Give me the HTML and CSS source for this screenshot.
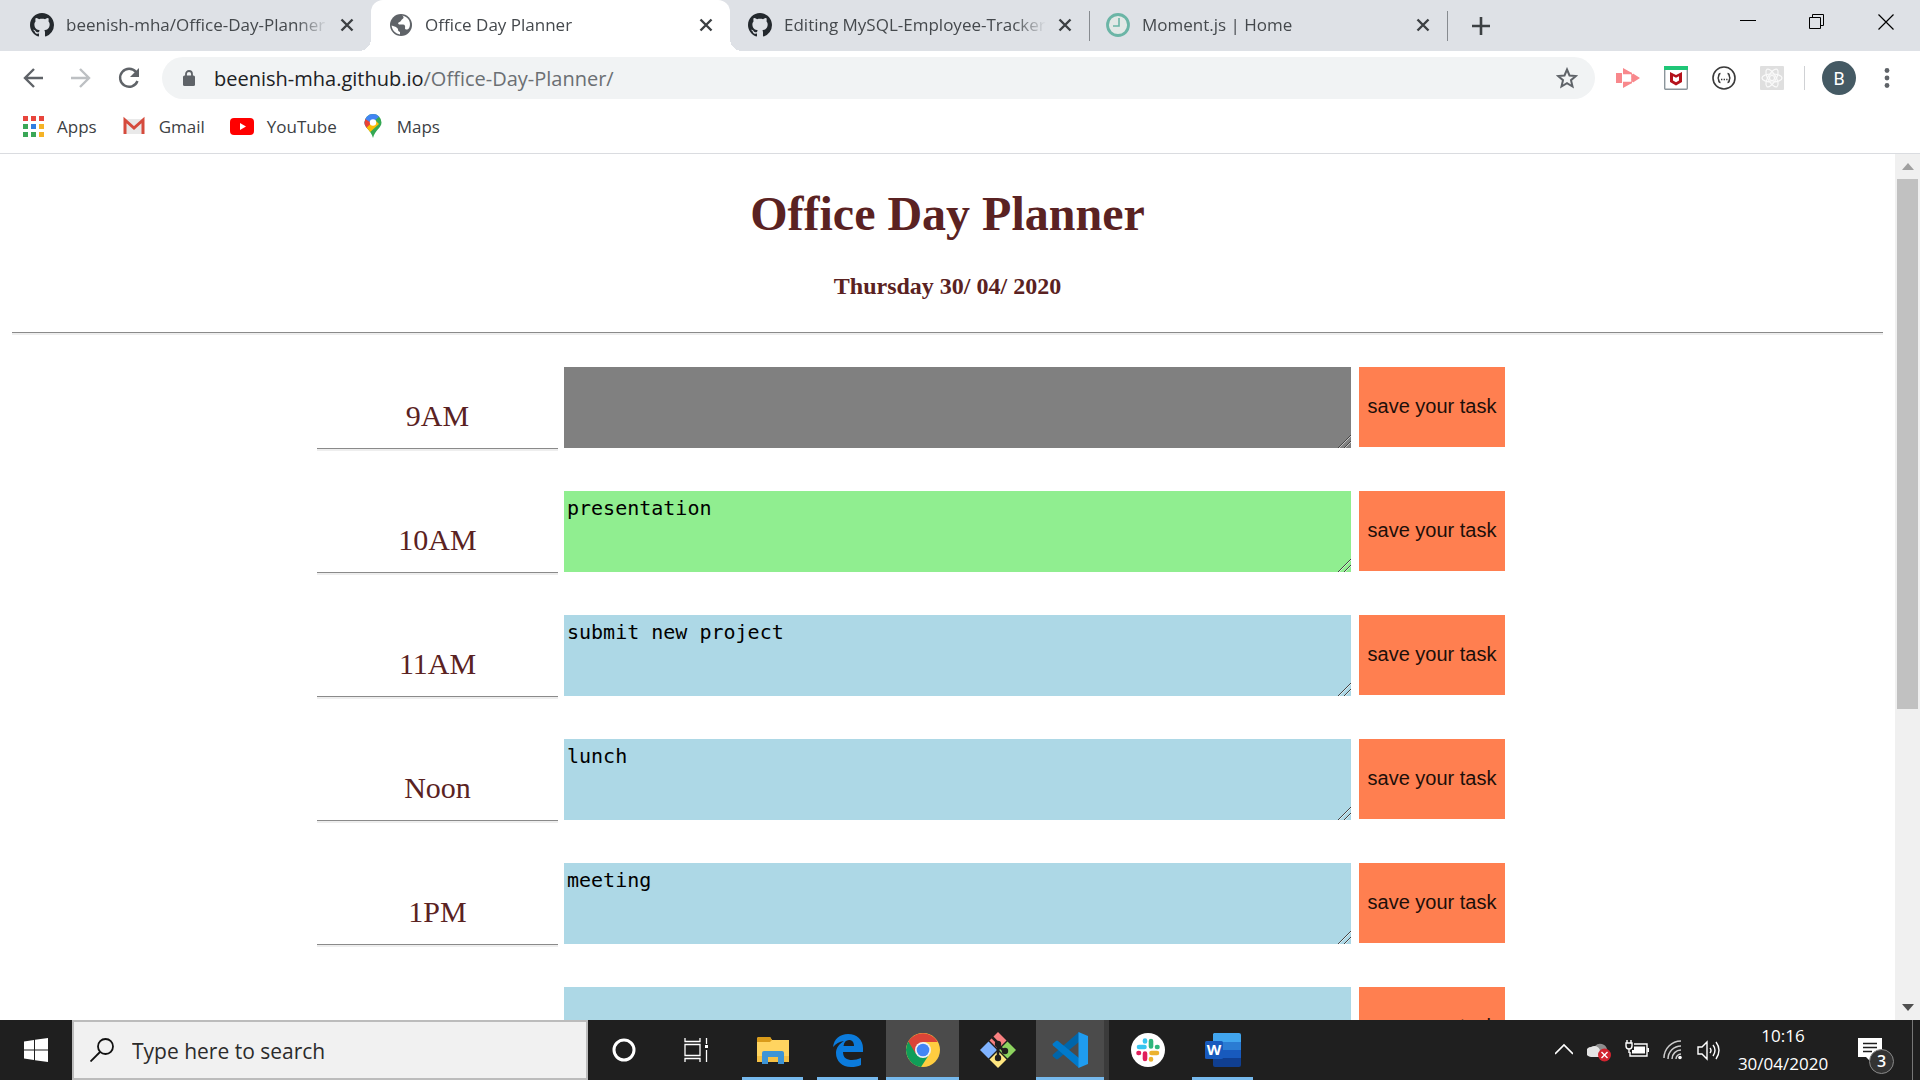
FILE: index.html
```html
<!DOCTYPE html>
<html lang="en">
<head>
<meta charset="utf-8">
<title>Office Day Planner</title>
<link rel="stylesheet" href="styles.css">
</head>
<body>
<svg class="defs" aria-hidden="true">
  <symbol id="octocat" viewBox="0 0 16 16"><path fill="#24292e" d="M8 0C3.58 0 0 3.58 0 8c0 3.54 2.29 6.53 5.47 7.59.4.07.55-.17.55-.38 0-.19-.01-.82-.01-1.49-2.01.37-2.53-.49-2.69-.94-.09-.23-.48-.94-.82-1.13-.28-.15-.68-.52-.01-.53.63-.01 1.08.58 1.23.82.72 1.21 1.87.87 2.33.66.07-.52.28-.87.51-1.07-1.78-.2-3.64-.89-3.64-3.95 0-.87.31-1.59.82-2.15-.08-.2-.36-1.02.08-2.12 0 0 .67-.21 2.2.82.64-.18 1.32-.27 2-.27s1.36.09 2 .27c1.53-1.04 2.2-.82 2.2-.82.44 1.1.16 1.92.08 2.12.51.56.82 1.27.82 2.15 0 3.07-1.87 3.75-3.65 3.95.29.25.54.73.54 1.48 0 1.07-.01 1.93-.01 2.2 0 .21.15.46.55.38A8.01 8.01 0 0 0 16 8c0-4.42-3.58-8-8-8z"/></symbol>
  <symbol id="cross" viewBox="0 0 14 14"><path d="M1.500 1.500l11 11M12.500 1.500l-11 11" stroke="#3c4043" stroke-width="2.400" fill="none"/></symbol>
</svg>

<header class="browser">
  <div class="tabs">
    <div class="tab">
      <svg class="icon"><use href="#octocat"/></svg>
      <span class="tab-title">beenish-mha/Office-Day-Planner</span>
      <button class="close" aria-label="Close tab"><svg><use href="#cross"/></svg></button>
    </div>
    <div class="tab active">
      <svg class="icon" viewBox="0 0 24 24"><circle cx="12" cy="12" r="11" fill="#5f6368"/><path d="M13 2.500c2 1 2 2.500.5 3.500-1.500 1-1.500 2.500-3 3-1.500.5-2 1.500-.5 2.500h4c2 0 2.500 2 2 3.500-.3 1 1 1.500 2 1.500 1.500 0 2.300-1.500 2.800-3.500C22 8 18 3 13 2.500zM2.600 12.500C3 17 6.500 21 11 21.400v-2.500c-1.500-.3-2-1.200-2-2.600 0-1-1-1.300-2-2.300z" fill="#fff"/></svg>
      <span class="tab-title">Office Day Planner</span>
      <button class="close" aria-label="Close tab"><svg><use href="#cross"/></svg></button>
    </div>
    <div class="tab">
      <svg class="icon"><use href="#octocat"/></svg>
      <span class="tab-title">Editing MySQL-Employee-Tracker</span>
      <button class="close" aria-label="Close tab"><svg><use href="#cross"/></svg></button>
    </div>
    <div class="tab ruled">
      <svg class="icon" viewBox="0 0 24 24"><circle cx="12" cy="12" r="10.500" fill="#e2e8e6" stroke="#6bb5a6" stroke-width="2.800"/><path d="M13 5v8H7" stroke="#6bb5a6" stroke-width="1.600" fill="none"/></svg>
      <span class="tab-title">Moment.js | Home</span>
      <button class="close" aria-label="Close tab"><svg><use href="#cross"/></svg></button>
    </div>
    <button class="new-tab" aria-label="New tab"><svg width="18" height="18" viewBox="0 0 18 18"><path d="M9 0v18M0 9h18" stroke="#3c4043" stroke-width="2.600"/></svg></button>
    <div class="window-controls">
      <button aria-label="Minimise"><svg width="16" height="16"><path d="M0 6.500h16" stroke="#000"/></svg></button>
      <button aria-label="Restore"><svg width="16" height="16" fill="none" stroke="#000"><path d="M.5 3.500h11v11H.5zM3.500 3.500v-3h11v11h-3"/></svg></button>
      <button aria-label="Close"><svg width="16" height="16"><path d="M.5.5l15 15M15.500.5l-15 15" stroke="#000" stroke-width="1.200"/></svg></button>
    </div>
  </div>

  <div class="toolbar">
    <div class="nav">
      <button aria-label="Back"><svg class="icon" viewBox="0 0 24 24" fill="none" stroke="#5f6368" stroke-width="2.400"><path d="M22 12H4M13 3l-9 9 9 9"/></svg></button>
      <button aria-label="Forward"><svg class="icon" viewBox="0 0 24 24" fill="none" stroke="#bdc0c3" stroke-width="2.400"><path d="M2 12h18M11 3l9 9-9 9"/></svg></button>
      <button aria-label="Reload"><svg class="icon" viewBox="0 0 24 24"><path d="M20.500 15A9 9 0 1 1 19 6" fill="none" stroke="#5f6368" stroke-width="2.400"/><path d="M22 2v9h-9z" fill="#5f6368"/></svg></button>
    </div>
    <div class="omnibox">
      <svg width="12" height="16" viewBox="0 0 12 16"><path d="M3 6V4a3 3 0 0 1 6 0v2" stroke="#5f6368" stroke-width="1.800" fill="none"/><rect y="5.500" width="12" height="10.500" rx="1.500" fill="#5f6368"/></svg>
      <span class="url"><b>beenish-mha.github.io</b>/Office-Day-Planner/</span>
      <button aria-label="Bookmark this page"><svg width="22" height="22" viewBox="0 0 22 22"><path d="M11 2.500l2.500 6 6.400.5-4.900 4.200 1.500 6.300L11 16.100l-5.500 3.400L7 13.200 2.100 9l6.400-.5z" fill="none" stroke="#5f6368" stroke-width="2"/></svg></button>
    </div>
    <div class="extensions">
      <button aria-label="Screen recorder"><svg class="icon" viewBox="0 0 24 24"><path d="M0 7h6v10H0zM7 2l9 5H7zM7 22l9-5H7zM17 7.500l7 4.500-7 4.500-2-4.500z" fill="#f8888c"/><path d="M7 7.500h9M7 16.500h9M16 8v3M16 13v3" stroke="#f8888c" stroke-width="1.500"/></svg></button>
      <button aria-label="McAfee"><svg class="icon" viewBox="0 0 24 24"><rect x=".7" y=".7" width="22.600" height="22.600" rx="1" fill="#fff" stroke="#8b959b" stroke-width="1.400"/><path d="M0 0h24v4H0z" fill="#1fc677"/><path d="M6 6l6 3 6-3v10l-6 3.500L6 16z" fill="#b5121b"/><path d="M9 10.200l3 1.500 3-1.500v4.300l-3 1.800-3-1.800z" fill="#fff"/></svg></button>
      <button aria-label="JSON formatter"><svg class="icon" viewBox="0 0 24 24" fill="none" stroke="#3a3a3a" stroke-width="1.600"><circle cx="12" cy="12" r="11"/><path d="M8.500 7.500c-3 0-.8 4.500-3 4.500 2.200 0 0 4.500 3 4.500M15.500 7.500c3 0 .8 4.500 3 4.500-2.200 0 0 4.500-3 4.500"/><path d="M9 13.500h6.500" stroke-dasharray="1.400 1.200"/></svg></button>
      <button aria-label="React tools"><svg class="icon" viewBox="0 0 24 24" fill="none" stroke="#fafafa" stroke-width="1.200"><rect width="24" height="24" rx="1" fill="#dfdfdf" stroke="none"/><ellipse cx="12" cy="12" rx="10" ry="4"/><ellipse cx="12" cy="12" rx="10" ry="4" transform="rotate(60 12 12)"/><ellipse cx="12" cy="12" rx="10" ry="4" transform="rotate(120 12 12)"/><circle cx="12" cy="12" r="2.500"/></svg></button>
    </div>
    <button class="avatar" aria-label="Profile">B</button>
    <button class="menu" aria-label="Menu"><svg width="6" height="20" fill="#5f6368"><circle cx="3" cy="2.500" r="2.400"/><circle cx="3" cy="10" r="2.400"/><circle cx="3" cy="17.500" r="2.400"/></svg></button>
  </div>

  <nav class="bookmarks">
    <a href="#"><svg width="22" height="22" viewBox="0 0 22 22"><path d="M1 1h5v5H1zM9 1h5v5H9zM17 1h5v5h-5z" fill="#e8453c"/><path d="M1 9h5v5H1z" fill="#3aa757"/><path d="M9 9h5v5H9z" fill="#2f7de1"/><path d="M17 9h5v5h-5z" fill="#f5b326"/><path d="M1 17h5v5H1zM9 17h5v5H9z" fill="#3aa757"/><path d="M17 17h5v5h-5z" fill="#f5b326"/></svg>Apps</a>
    <a href="#"><svg width="24" height="22" viewBox="0 0 22 22"><path d="M1 4h20v15H1z" fill="#e9e9e9"/><path d="M2 19V5l9 8 9-8v14" fill="none" stroke="#d54b3d" stroke-width="3"/></svg>Gmail</a>
    <a href="#"><svg width="24" height="22" viewBox="0 0 24 22"><rect x="0" y="3" width="24" height="17" rx="4" fill="#f00"/><path d="M10 8l6 3.500-6 3.500z" fill="#fff"/></svg>YouTube</a>
    <a href="#"><svg width="22" height="24" viewBox="0 0 22 24"><clipPath id="pin"><path d="M11 0a8.500 8.500 0 0 0-8.500 8.500C2.500 14 9 16 11 24c2-8 8.500-10 8.500-15.500A8.500 8.500 0 0 0 11 0z"/></clipPath><g clip-path="url(#pin)"><path d="M0 0h22v24H0z" fill="#34a853"/><path d="M0 18L20 0H0z" fill="#4285f4"/><path d="M0 3l11 7-9 8z" fill="#ea4335"/><path d="M3 15L13 6l4 4-10 9z" fill="#fbbc04"/></g><circle cx="11" cy="8.500" r="3.200" fill="#fff"/></svg>Maps</a>
  </nav>
</header>

<div class="viewport">
  <main class="page">
    <h1>Office Day Planner</h1>
    <h2>Thursday 30/ 04/ 2020</h2>
    <hr>
    <form class="planner">
      <div class="slot"><label for="t9">9AM</label><textarea id="t9" class="past"></textarea><button type="button">save your task</button></div>
      <div class="slot"><label for="t10">10AM</label><textarea id="t10" class="present">presentation</textarea><button type="button">save your task</button></div>
      <div class="slot"><label for="t11">11AM</label><textarea id="t11">submit new project</textarea><button type="button">save your task</button></div>
      <div class="slot"><label for="t12">Noon</label><textarea id="t12">lunch</textarea><button type="button">save your task</button></div>
      <div class="slot"><label for="t13">1PM</label><textarea id="t13">meeting</textarea><button type="button">save your task</button></div>
      <div class="slot"><label for="t14">2PM</label><textarea id="t14"></textarea><button type="button">save your task</button></div>
    </form>
  </main>
  <div class="scrollbar">
    <svg width="12" height="7"><path d="M0 7l6-7 6 7z" fill="#a0a0a0"/></svg>
    <div class="track"><div class="thumb"></div></div>
    <svg width="12" height="7"><path d="M0 0l6 7 6-7z" fill="#505050"/></svg>
  </div>
</div>

<footer class="taskbar">
  <button class="start" aria-label="Start"><svg width="24" height="24" fill="#fff"><path d="M0 3.500L10 2v9.500H0zM11 1.800L24 0v11.500H11zM0 12.500h10V22L0 20.500zM11 12.500h13V24l-13-1.800z"/></svg></button>
  <div class="search">
    <svg width="24" height="24" fill="none" stroke="#111" stroke-width="1.800"><circle cx="15.500" cy="8.500" r="7.500"/><path d="M10 14L.5 23.500"/></svg>
    <input type="text" placeholder="Type here to search" aria-label="Search">
  </div>
  <div class="system">
    <button aria-label="Cortana"><svg width="24" height="24"><circle cx="12" cy="12" r="10" fill="none" stroke="#fff" stroke-width="3"/></svg></button>
    <button aria-label="Task view"><svg width="24" height="24" fill="none" stroke="#fff" stroke-width="1.300"><path d="M1 6.500h15v11H1zM1 0v3.500h15V0M1 24v-3.500h15V24M22.500 0v6M22.500 12v12"/><path d="M21 7h3v3h-3z" fill="#fff" stroke="none"/></svg></button>
  </div>
  <div class="apps">
    <button class="open" aria-label="File Explorer"><svg width="32" height="32"><path d="M0 5q0-2 2-2h11l2 3h17v22H0z" fill="#ffd460"/><path d="M0 5q0-2 2-2h11l2 3-2 2H0z" fill="#d99b1a"/><path d="M0 22h32v6H0z" fill="#f5c044"/><path d="M5 30V19q0-2 2-2h18q2 0 2 2v11h-6v-7H11v7z" fill="#3d94d6"/></svg></button>
    <button class="open" aria-label="Edge"><svg width="30" height="34" viewBox="0 0 30 34"><path d="M0 14C1 6 7 1 15 1c9 0 15 6 15 14v4H10c0 6 4 8 9 8 3 0 6-1 9-2v7c-3 1.500-6 2-10 2C9 34 3 28 3 20c0-5 3-9 8-12-5 .5-8 2.500-11 6zm10.500-1H21c0-4-2-6-5-6s-5 2-5.500 6z" fill="#0b7bdc"/></svg></button>
    <button class="open current" aria-label="Chrome"><svg width="34" height="34" viewBox="0 0 34 34"><circle cx="17" cy="17" r="17" fill="#ffcd40"/><path d="M17 17L2.300 8.500A17 17 0 0 0 15 33.900l8.500-13z" fill="#109d58"/><path d="M2.300 8.500A17 17 0 0 1 31.700 9H17v8l-7 4z" fill="#db4437"/><circle cx="17" cy="17" r="8" fill="#f1f1f1"/><circle cx="17" cy="17" r="6.300" fill="#4285f4"/></svg></button>
    <button aria-label="Git"><svg width="36" height="36" viewBox="0 0 36 36"><path d="M18 0l8.500 8.500L18 17 9.500 8.500z" fill="#f88080"/><path d="M8.500 9.500L17 18l-8.500 8.500L0 18z" fill="#80b3ff"/><path d="M27.500 9.500L36 18l-8.500 8.500L19 18z" fill="#8dd35f"/><path d="M18 19l8.500 8.500L18 36l-8.500-8.500z" fill="#ffe680"/><path d="M12 5l6 6v17M18 13l7 7" fill="none" stroke="#201e1d" stroke-width="2.600"/><g fill="#201e1d"><circle cx="18" cy="12" r="3.200"/><circle cx="25" cy="19" r="3.200"/><circle cx="18" cy="26" r="3.200"/></g></svg></button>
    <button class="open current grouped" aria-label="Visual Studio Code"><svg width="36" height="36" viewBox="0 0 36 36"><path d="M27 0v10L6 27q-1 .8-2 0l-3-2.500q-1-1 0-2z" fill="#0065a9"/><path d="M27 36V26L6 9q-1-.8-2 0l-3 2.500q-1 1 0 2z" fill="#007acc"/><path d="M26.500 0L36 4v28l-9.500 4z" fill="#1f9cf0"/></svg></button>
    <button aria-label="Slack"><svg width="34" height="34" viewBox="0 0 34 34" fill="none" stroke-width="4.600" stroke-linecap="round"><circle cx="17" cy="17" r="17" fill="#fff"/><path d="M8 14h5.500M14 7.500v1" stroke="#36c5f0"/><path d="M20 8v5.500M26 14h.5" stroke="#2eb67d"/><path d="M20.500 20H26M20 26v.5" stroke="#ecb22e"/><path d="M14 20.500V26M7.500 20H8" stroke="#e01e5a"/></svg></button>
    <button class="open" aria-label="Word"><svg width="36" height="34" viewBox="0 0 36 34"><path d="M9 0h25q2 0 2 2v7H8V1z" fill="#41a5ee"/><path d="M8 9h28v8H8z" fill="#2b7cd3"/><path d="M8 17h28v8H8z" fill="#185abd"/><path d="M8 25h28v7q0 2-2 2H10q-2 0-2-2z" fill="#103f91"/><rect y="8" width="18" height="18" rx="1.500" fill="#185abd"/><text x="9" y="22" class="word-mark">W</text></svg></button>
  </div>
  <div class="tray">
    <svg width="18" height="24" fill="none" stroke="#fff" stroke-width="1.600"><path d="M0 16l9-9 9 9"/></svg>
    <svg width="24" height="24"><path d="M7 16a6 6 0 0 1 1-8 7 7 0 0 1 12 3v5z" fill="#8e8e8e"/><path d="M4 19a5 5 0 0 1 0-10 6 6 0 0 1 9 3v7z" fill="#e4e4e4"/><circle cx="17.500" cy="17" r="6.500" fill="#d1242f"/><path d="M14.500 14l6 6M20.500 14l-6 6" stroke="#fff" stroke-width="1.400"/></svg>
    <svg width="24" height="24" fill="none" stroke="#fff" stroke-width="1.400"><path d="M9 6h13v12H5v-4M23.500 10v4"/><path d="M1 5h6v3q0 3-3 3t-3-3zM2 2v3M6 2v3M4 11v4"/><path d="M9 8.500h11v7H7V12h2z" fill="#fff" stroke="none"/></svg>
    <svg width="20" height="24" fill="none" stroke="#ccc" stroke-width="1.500"><path d="M1 20A17 17 0 0 1 18 3M5 21A13 13 0 0 1 18 8M9 21a9 9 0 0 1 9-9M13 21a5 5 0 0 1 5-5"/><circle cx="17" cy="19.500" r="1.800" fill="#fff" stroke="none"/></svg>
    <svg width="24" height="24" fill="none" stroke="#fff" stroke-width="1.400"><path d="M1 9h4l5-5v17l-5-5H1zM13 10q2 2.500 0 5M16 7q4 5 0 11M19 4q6 8 0 17"/></svg>
    <div class="clock"><time>10:16</time><time>30/04/2020</time></div>
    <button class="notice" aria-label="Notifications"><svg width="24" height="24"><path d="M0 0h24v19H13v5l-5-5H0z" fill="#fff"/><path d="M5 5.500h14M5 9.500h14M5 13.500h9" stroke="#1f1f1f" stroke-width="1.400"/></svg><span class="count">3</span></button>
  </div>
</footer>
</body>
</html>
```
FILE: styles.css
```css
* { box-sizing: border-box; }

body {
  margin: 0;
  height: 100vh;
  display: flex;
  flex-direction: column;
  overflow: hidden;
  background: #fff;
  font-family: "Open Sans", "Noto Sans", sans-serif;
  font-size: 17px;
  color: #45494d;
}

button { padding: 0; border: 0; background: none; font: inherit; color: inherit; }
svg { display: block; flex: none; }
.defs { position: absolute; width: 0; height: 0; }
.icon { width: 24px; height: 24px; }

/* Browser frame */
.browser { flex: none; border-bottom: 1px solid #dadce0; }

.tabs {
  display: flex;
  align-items: center;
  height: 51px;
  padding-left: 12px;
  background: #dee1e6;
}
.tab {
  position: relative;
  flex: 0 1 359px;
  min-width: 0;
  height: 51px;
  display: flex;
  align-items: center;
  gap: 12px;
  padding: 0 17px 2px 18px;
}
.tab.active { background: #fff; border-radius: 12px 12px 0 0; }
.tab.active::before,
.tab.active::after {
  content: "";
  position: absolute;
  bottom: 0;
  width: 12px;
  height: 12px;
}
.tab.active::before { left: -12px; background: radial-gradient(circle at 0 0, transparent 12px, #fff 12px); }
.tab.active::after { right: -12px; background: radial-gradient(circle at 100% 0, transparent 12px, #fff 12px); }
.tab.ruled { border: solid #878b90; border-width: 0 1px; height: 30px; padding-left: 16px; }
.tab-title {
  flex: 1;
  min-width: 0;
  overflow: hidden;
  white-space: nowrap;
  mask-image: linear-gradient(to right, #000 calc(100% - 32px), transparent);
}
.close svg { width: 14px; height: 14px; }
.new-tab { margin-left: 24px; }
.window-controls { display: flex; align-self: flex-start; margin-left: auto; height: 44px; align-items: center; }
.window-controls button { width: 69px; display: grid; place-items: center; }

.toolbar { display: flex; align-items: center; height: 54px; padding: 0 30px 0 21px; }
.nav { display: flex; gap: 24px; width: 141px; }
.omnibox {
  flex: 1;
  display: flex;
  align-items: center;
  gap: 19px;
  height: 42px;
  padding: 0 17px 0 21px;
  border-radius: 21px;
  background: #f1f3f4;
  font-size: 20px;
}
.url { flex: 1; color: #6b6f73; }
.url b { font-weight: 400; color: #202124; }
.extensions {
  display: flex;
  gap: 24px;
  margin-left: 21px;
  padding-right: 20px;
  border-right: 1px solid #cfd1d4;
}
.avatar {
  width: 34px;
  height: 34px;
  margin: 0 28px 0 17px;
  border-radius: 50%;
  background: #455a64;
  color: #fff;
  font: 18px Roboto, sans-serif;
}

.bookmarks { display: flex; gap: 25px; height: 48px; padding: 0 22px 6px; align-items: center; }
.bookmarks a { display: flex; align-items: center; gap: 13px; color: #3c4043; text-decoration: none; }

/* Planner page */
.viewport { flex: 1; min-height: 0; display: flex; }
.page {
  flex: 1;
  min-width: 0;
  overflow: hidden;
  padding: 0 12px;
  font-family: "Liberation Serif", serif;
  color: #5a2222;
  text-align: center;
}
.page h1 { margin: 32px 0 0; font-size: 48px; line-height: 56px; font-variant-ligatures: none; }
.page h2 { margin: 30px 0 0; font-size: 24px; line-height: 28px; }
.page hr {
  margin: 32px 0;
  border: 0;
  height: 3px;
  border-top: 1px solid #8a8a8a;
  background: #eee;
}
.planner { margin: 0 378px 0 305px; display: grid; gap: 40px; }
.slot { display: flex; align-items: flex-start; }
.slot label {
  width: 241px;
  height: 84px;
  margin-right: 6px;
  padding-top: 31px;
  font-size: 30px;
  line-height: 36px;
  border-bottom: 2px solid #eee;
  box-shadow: inset 0 -1px #8a8a8a;
}
.slot textarea {
  flex: 1;
  min-width: 0;
  height: 81px;
  margin-right: 8px;
  padding: 5px 3px;
  border: 0;
  background: lightblue;
  color: #000;
  font: 20px/24px "DejaVu Sans Mono", monospace;
  resize: both;
}
.slot textarea.past { background-color: gray; }
.slot textarea.present { background-color: lightgreen; }
/* Two diagonal grip lines */
.slot textarea::-webkit-resizer {
  background: linear-gradient(135deg,
    transparent 54%, #444 54% 58%, #ffffff88 58% 61%,
    transparent 61% 75%, #444 75% 79%, #ffffff88 79% 82%, transparent 82%);
}
.slot button {
  width: 146px;
  height: 80px;
  padding-bottom: 2px;
  background: coral;
  color: #1c0f0a;
  font: 20px "Liberation Sans", sans-serif;
}

.scrollbar {
  flex: none;
  width: 25px;
  display: flex;
  flex-direction: column;
  align-items: center;
  gap: 9px;
  padding: 9px 0;
  background: #f0f0f0;
}
.track { flex: 1; width: 21px; }
.thumb { height: 65%; background: #c1c1c1; }

/* Taskbar */
.taskbar { flex: none; height: 60px; display: flex; background: #1f1f1f; color: #fff; }
.start { width: 72px; display: grid; place-items: center; }
.search {
  width: 516px;
  display: flex;
  align-items: center;
  gap: 18px;
  padding: 0 16px;
  border: 2px solid #bcbcbc;
  background: #f1f1f1;
}
.search input {
  flex: 1;
  min-width: 0;
  padding: 2px 0 0;
  border: 0;
  background: none;
  font: 21px "Open Sans", sans-serif;
}
.search input::placeholder { color: #2b2b2b; opacity: 1; }
.system { display: flex; margin-right: 4px; }
.system button { width: 72px; display: grid; place-items: center; }
.apps { display: flex; }
.apps button {
  width: 73px;
  height: 60px;
  margin-right: 2px;
  display: grid;
  place-items: center;
}
.apps .open { background: linear-gradient(#76b9ed, #76b9ed) 50% 100% / 61px 3px no-repeat; }
.apps .current { background: linear-gradient(#76b9ed, #76b9ed) 0 100% / 100% 3px no-repeat #4b4b4b; }
.apps .grouped { border-right: 5px solid #3b3b3b; }
.word-mark { font: bold 15px "Open Sans", sans-serif; fill: #fff; text-anchor: middle; }

.tray { display: flex; align-items: center; gap: 14px; margin-left: auto; padding-right: 29px; position: relative; }
.tray::after { content: ""; position: absolute; right: 7px; width: 1px; height: 60px; background: #777; }
.clock { display: flex; flex-direction: column; align-items: center; gap: 4px; line-height: 24px; width: 96px; }
.notice { position: relative; margin: 0 9px 0 13px; }
.count {
  position: absolute;
  left: 11px;
  top: 11px;
  width: 25px;
  height: 25px;
  border: 1px solid #8a8a8a;
  border-radius: 50%;
  background: #333;
  font-size: 16px;
  font-weight: 600;
  line-height: 23px;
}
```
